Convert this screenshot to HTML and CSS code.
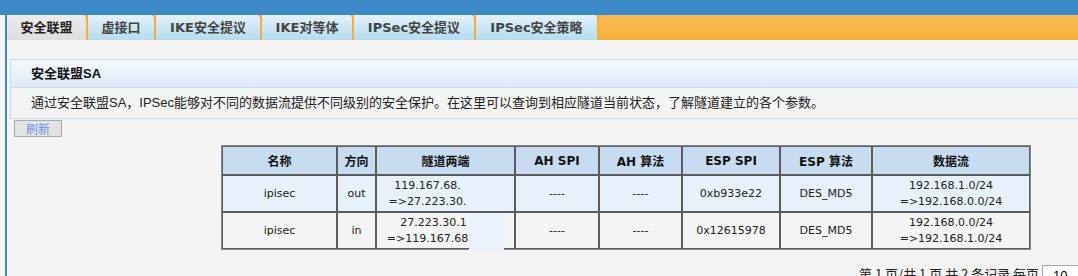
FILE: index.html
```html
<!DOCTYPE html>
<html>
<head>
  <title>安全联盟SA</title>
  <link rel="stylesheet" href="styles.css">
</head>
<body>
  <div class="topbar"></div>
  <div class="frame">
    <div class="tabs">
      <div class="tab active">安全联盟</div>
      <div class="tab">虚接口</div>
      <div class="tab">IKE安全提议</div>
      <div class="tab">IKE对等体</div>
      <div class="tab">IPSec安全提议</div>
      <div class="tab">IPSec安全策略</div>
      <div class="tab-fill"></div>
    </div>

    <div class="content">
      <div class="panel">
        <div class="panel-title">安全联盟SA</div>
        <div class="panel-desc">通过安全联盟SA，IPSec能够对不同的数据流提供不同级别的安全保护。在这里可以查询到相应隧道当前状态，了解隧道建立的各个参数。</div>
      </div>
      <button class="refresh">刷新</button>

      <table class="sa-table">
        <colgroup>
          <col style="width:115px">
          <col style="width:39px">
          <col style="width:139px">
          <col style="width:84px">
          <col style="width:83px">
          <col style="width:98px">
          <col style="width:92px">
          <col style="width:158px">
        </colgroup>
        <tr class="head">
          <th>名称</th>
          <th>方向</th>
          <th>隧道两端</th>
          <th>AH SPI</th>
          <th>AH 算法</th>
          <th>ESP SPI</th>
          <th>ESP 算法</th>
          <th>数据流</th>
        </tr>
        <tr class="odd">
          <td>ipisec</td>
          <td>out</td>
          <td class="ends">119.167.68.<span class="mask"></span><br>=&gt;27.223.30.<span class="mask"></span></td>
          <td>----</td>
          <td>----</td>
          <td>0xb933e22</td>
          <td>DES_MD5</td>
          <td>192.168.1.0/24<br>=&gt;192.168.0.0/24</td>
        </tr>
        <tr class="even">
          <td>ipisec</td>
          <td>in</td>
          <td class="ends">27.223.30.1<span class="mask short"></span><br>=&gt;119.167.68<span class="mask"></span></td>
          <td>----</td>
          <td>----</td>
          <td>0x12615978</td>
          <td>DES_MD5</td>
          <td>192.168.0.0/24<br>=&gt;192.168.1.0/24</td>
        </tr>
      </table>

      <div class="pager">
        第 1 页/共 1 页 共 2 条记录 每页 <input class="per-page" value="10">
      </div>
    </div>
  </div>
</body>
</html>
```

FILE: styles.css
```css
* {
  box-sizing: border-box;
}

html, body {
  overflow: hidden;
}

body {
  margin: 0;
  width: 1090px;
  background: #f4f4f4;
  font-family: "Liberation Sans", "Noto Sans CJK SC", sans-serif;
  font-size: 13px;
  color: #222;
}

.topbar {
  height: 15px;
  background: #3e8ac8;
}

.frame {
  border-left: 2px solid #3e8ac8;
  margin-left: 5px;
  min-height: 261px;
}

.tabs {
  display: flex;
  height: 25px;
}

.tab {
  position: relative;
  padding: 0;
  text-align: center;
  line-height: 25px;
  font-weight: bold;
  font-size: 13px;
  font-family: "DejaVu Sans", "Noto Sans CJK SC", sans-serif;
  color: #444;
  background: linear-gradient(#e4f2fb, #b5dbf0);
  border-right: 2px solid #f6ae38;
  white-space: nowrap;
}

.tab::after {
  content: "";
  position: absolute;
  right: -4px;
  top: 0;
  border-left: 3px solid transparent;
  border-right: 3px solid transparent;
  border-top: 4px solid #f6ae38;
}

.tab.active {
  background: linear-gradient(#ececec, #dedede);
  color: #222;
}

.tab:nth-child(1) { width: 81px; }
.tab:nth-child(2) { width: 68px; }
.tab:nth-child(3) { width: 106px; }
.tab:nth-child(4) { width: 92px; }
.tab:nth-child(5) { width: 122px; }
.tab:nth-child(6) { width: 123px; }

.tab-fill {
  flex: 1;
  background: linear-gradient(#f8bb55, #f7b548 60%, #f6ae38);
}

.content {
  padding: 19px 0 0 3px;
}

.panel {
  border: 1px solid #c4daf3;
  border-right: none;
}

.panel-title {
  height: 28px;
  line-height: 28px;
  padding-left: 20px;
  font-weight: bold;
  color: #111;
  background: linear-gradient(#f6f9fe, #dde9f8);
  border-bottom: 1px solid #c4daf3;
}

.panel-desc {
  height: 30px;
  line-height: 30px;
  padding-left: 20px;
  color: #222;
}

.refresh {
  display: block;
  margin: 1px 0 0 4px;
  width: 48px;
  height: 17px;
  padding: 0;
  border: 1px solid #aaa;
  background: #e3e3e3;
  color: #6f8fe6;
  font-family: "Noto Sans CJK SC", sans-serif;
  font-size: 12px;
  line-height: 15px;
}

.sa-table {
  margin: 8px 0 0 211px;
  width: 808px;
  table-layout: fixed;
  border-collapse: separate;
  border-spacing: 0;
  border: 1px solid #888;
  font-family: "DejaVu Sans", "Noto Sans CJK SC", sans-serif;
  font-size: 11px;
}

.sa-table th,
.sa-table td {
  border: 1px solid #5c5c5c;
  text-align: center;
  padding: 0;
}

.sa-table th {
  height: 29px;
  background: #c7dcf0;
  font-size: 12px;
  font-weight: bold;
  color: #111;
}

.sa-table td {
  height: 37px;
  line-height: 16px;
  color: #222;
}

.sa-table tr.odd td {
  background: #e7f1fc;
}

.sa-table tr.even td {
  background: #f4f4f4;
}

.ends {
  position: relative;
}

/* hidden part of the addresses */
.mask {
  display: inline-block;
  width: 36px;
  height: 1px;
}

.mask.short {
  width: 24px;
}

.even .ends::after {
  content: "";
  position: absolute;
  left: 92px;
  top: 1px;
  width: 35px;
  height: 36px;
  background: #e8f2fc;
}

.pager {
  margin-top: 14px;
  text-align: right;
  padding-right: 4px;
  font-family: "Noto Sans CJK SC", sans-serif;
  font-size: 13px;
  color: #222;
}

.per-page {
  width: 44px;
  height: 20px;
  border: 1px solid #aaa;
  font-size: 13px;
  padding: 0 0 0 10px;
  vertical-align: middle;
}
```
